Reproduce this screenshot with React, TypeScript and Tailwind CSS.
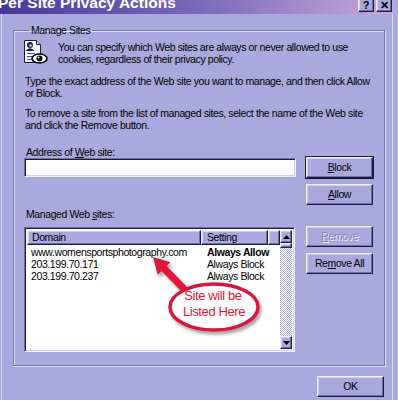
import React from "react";

const raised =
  "border border-t-[#f2f1fd] border-l-[#f2f1fd] border-b-[#1c1a3a] border-r-[#1c1a3a] shadow-[inset_-1px_-1px_0_#716fab,inset_1px_1px_0_#cfcef1]";
const sunken =
  "border border-t-[#716fab] border-l-[#716fab] border-b-[#f2f1fd] border-r-[#f2f1fd] shadow-[inset_1px_1px_0_#1c1a3a,inset_-1px_-1px_0_#cfcef1]";

function Btn({ children, className = "" }: { children: React.ReactNode; className?: string }) {
  return (
    <div className={`${raised} w-[67px] h-[21px] bg-[#aaa8dc] flex items-center justify-center ${className}`}>
      {children}
    </div>
  );
}

function DocIcon() {
  return (
    <svg width="26" height="24" viewBox="0 0 26 24">
      <path d="M2.5 0.5 H14.5 L18.5 4.5 V22.5 H2.5 Z" fill="#ffffff" stroke="#1a1a4a" />
      <path d="M14.5 0.5 V4.5 H18.5" fill="#d8d8ec" stroke="#1a1a4a" />
      <circle cx="8" cy="5" r="3" fill="#141a50" />
      <path d="M3.5 11 Q8 5.5 12.5 11 Z" fill="#141a50" />
      <circle cx="8.5" cy="5.5" r="1.3" fill="#f0d0b0" />
      <rect x="5" y="13" width="8" height="1" fill="#3050c8" />
      <rect x="5" y="16" width="5" height="1" fill="#3050c8" />
      <rect x="5" y="19" width="5" height="1" fill="#3050c8" />
      <ellipse cx="17.5" cy="18.5" rx="7.5" ry="4.5" fill="#ffffff" stroke="#000000" strokeWidth="1.6" />
      <circle cx="17.5" cy="18.5" r="3" fill="#000000" />
      <circle cx="16.5" cy="17.5" r="0.9" fill="#ffffff" />
    </svg>
  );
}

function UpArrow() {
  return (
    <svg width="7" height="4" viewBox="0 0 7 4">
      <path d="M3.5 0 L7 4 H0 Z" fill="#000" />
    </svg>
  );
}
function DownArrow() {
  return (
    <svg width="7" height="4" viewBox="0 0 7 4">
      <path d="M0 0 H7 L3.5 4 Z" fill="#000" />
    </svg>
  );
}

export default function App() {
  return (
    <div className="w-[398px] h-[400px] overflow-hidden bg-[#aeacdf] flex font-['Liberation_Sans',Arial,sans-serif] text-[10.5px] tracking-[-0.4px] text-black relative">
      <div className="w-[393px] flex flex-col bg-[#aaa8dc]">
        {/* Title bar */}
        <div className="h-[14px] flex items-start overflow-hidden bg-linear-to-r from-[#47389a] via-[#7a68b8] to-[#c9a8da]">
          <span className="flex-1 -ml-[2px] -mt-[6px] leading-[18px] text-[15.5px] font-bold text-white tracking-normal whitespace-nowrap">
            Per Site Privacy Actions
          </span>
          <div className="flex gap-[2px] mr-[1px] -mt-[2px]">
            <div className={`${raised} w-[16px] h-[14px] bg-[#aaa8dc] flex items-end justify-center text-[11px] font-bold leading-[11px] tracking-normal`}>?</div>
            <div className={`${raised} w-[16px] h-[14px] bg-[#aaa8dc] flex items-end justify-center text-[11px] font-bold leading-[11px] tracking-normal`}>✕</div>
          </div>
        </div>

        {/* Body */}
        <div className="flex-1 ml-px w-[392px] border-l border-r border-[#dedcf8] flex flex-col">
          <fieldset className="mt-[10px] ml-[11px] w-[372px] border border-[#7472b0] shadow-[1px_1px_0_#e0dffa,inset_1px_1px_0_#e0dffa] pl-[10px] pt-[4px] pb-[13px]">
            <legend className="ml-[5px] px-[2px] leading-[12px]">Manage Sites</legend>

            <div className="flex">
              <div className="-ml-[2px] w-[26px] h-[24px]">
                <DocIcon />
              </div>
              <div className="ml-[10px] mt-[1px] leading-[12px]">
                You can specify which Web sites are always or never allowed to use
                <br />
                cookies, regardless of their privacy policy.
              </div>
            </div>

            <div className="ml-[1px] mt-[10px] leading-[12px]">
              Type the exact address of the Web site you want to manage, and then click Allow
              <br />
              or Block.
            </div>

            <div className="ml-[1px] mt-[8px] leading-[12px]">
              To remove a site from the list of managed sites, select the name of the Web site
              <br />
              and click the Remove button.
            </div>

            <div className="ml-[2px] mt-[15px] leading-[12px]">
              Address of <u>W</u>eb site:
            </div>

            <div className="flex gap-[10px] -mt-[1px]">
              <div className="w-[272px] flex flex-col">
                <div className={`${sunken} mt-[1px] h-[19px] bg-white`} />
                <div className="mt-[31px] ml-[2px] leading-[12px]">
                  Managed Web <u>s</u>ites:
                </div>
                <div className={`${sunken} mt-[7px] w-[271px] h-[125px] bg-white flex p-[2px] overflow-hidden`}>
                  <div className="flex-1 flex flex-col overflow-hidden">
                    <div className="flex h-[15px] shrink-0">
                      <div className={`${raised} w-[174px] bg-[#aaa8dc] pl-[4px] leading-[12px]`}>Domain</div>
                      <div className={`${raised} w-[67px] bg-[#aaa8dc] pl-[5px] leading-[12px]`}>Setting</div>
                      <div className={`${raised} flex-1 bg-[#aaa8dc]`} />
                    </div>
                    <div className="flex leading-[12px] h-[12px] mt-[1px]">
                      <div className="w-[174px] pl-[4px]">www.womensportsphotography.com</div>
                      <div className="pl-[6px] font-bold">Always Allow</div>
                    </div>
                    <div className="flex leading-[12px] h-[12px]">
                      <div className="w-[174px] pl-[4px]">203.199.70.171</div>
                      <div className="pl-[6px]">Always Block</div>
                    </div>
                    <div className="flex leading-[12px] h-[12px]">
                      <div className="w-[174px] pl-[4px]">203.199.70.237</div>
                      <div className="pl-[6px]">Always Block</div>
                    </div>
                    <div className="flex leading-[12px] h-[12px] mt-[66px]">
                      <div className="w-[174px] pl-[4px]">203.199.70.161</div>
                      <div className="pl-[6px]">Always Block</div>
                    </div>
                  </div>
                  <div className="w-[12px] flex flex-col">
                    <div className={`${raised} h-[13px] bg-[#aaa8dc] flex items-center justify-center`}>
                      <UpArrow />
                    </div>
                    <div className={`${raised} h-[5px] bg-[#aaa8dc]`} />
                    <div className="flex-1 bg-[image:repeating-conic-gradient(#ffffff_0%_25%,#aaa8dc_0%_50%)] bg-[length:2px_2px]" />
                    <div className={`${raised} h-[13px] bg-[#aaa8dc] flex items-center justify-center`}>
                      <DownArrow />
                    </div>
                  </div>
                </div>
              </div>

              <div className="flex flex-col">
                <Btn className="outline outline-1 outline-[#1c1a3a] -outline-offset-0">
                  <span><u>B</u>lock</span>
                </Btn>
                <Btn className="mt-[6px]">
                  <span><u>A</u>llow</span>
                </Btn>
                <Btn className="mt-[21px]">
                  <span className="text-[#8886b8] [text-shadow:1px_1px_0_#f2f1fd]"><u>R</u>emove</span>
                </Btn>
                <Btn className="mt-[6px]">
                  <span>Re<u>m</u>ove All</span>
                </Btn>
              </div>
            </div>
          </fieldset>

          <div className="w-[372px] ml-[11px] flex justify-end mt-[10px]">
            <Btn className="mr-[1px]">
              <span>OK</span>
            </Btn>
          </div>
        </div>
      </div>

      {/* Annotation overlay */}
      <svg className="absolute inset-0 pointer-events-none" width="398" height="400" viewBox="0 0 398 400">
        <defs>
          <filter id="sh" x="-20%" y="-20%" width="140%" height="150%">
            <feDropShadow dx="2" dy="3" stdDeviation="1.5" floodColor="#000" floodOpacity="0.35" />
          </filter>
        </defs>
        <polygon
          points="153,257 170.6,262.2 166.6,266.1 188.9,289.1 183.9,293.9 161.6,270.9 157.6,274.8"
          fill="#e4143c"
          filter="url(#sh)"
        />
        <ellipse cx="214" cy="307" rx="44" ry="23" fill="#ffffff" stroke="#d8143a" strokeWidth="3.5" filter="url(#sh)" />
        <text x="213" y="300" textAnchor="middle" fontFamily="Liberation Sans, Arial, sans-serif" fontSize="13" fill="#e0163c">
          Site will be
        </text>
        <text x="214" y="316" textAnchor="middle" fontFamily="Liberation Sans, Arial, sans-serif" fontSize="13" fill="#e0163c">
          Listed Here
        </text>
      </svg>
    </div>
  );
}
